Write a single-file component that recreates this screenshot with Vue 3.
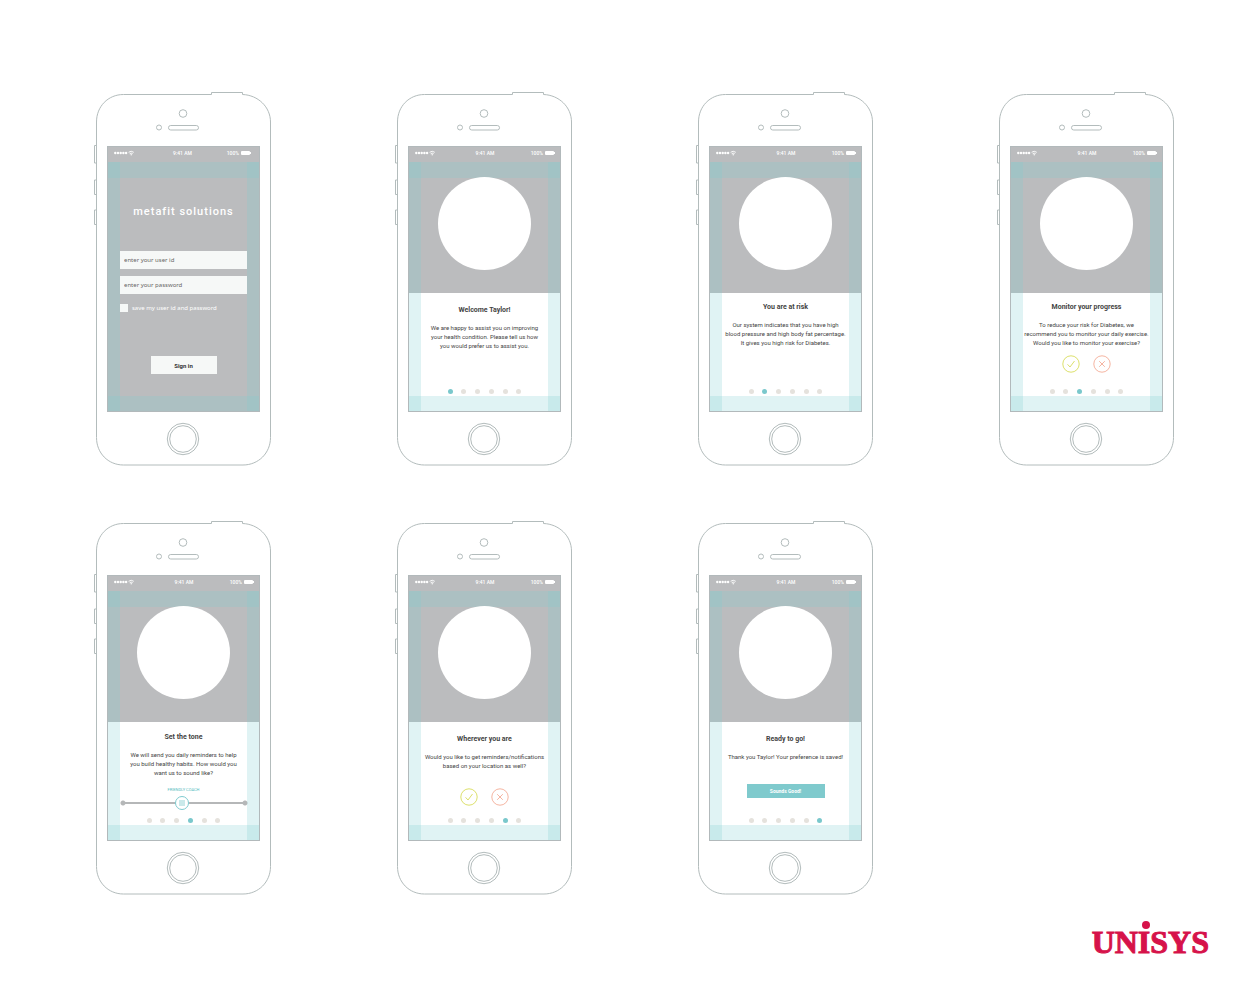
<script setup>
import { ref } from 'vue'

const userId = ref('')
const password = ref('')
const remember = ref(false)
const tone = ref(49)

const phones = [
  { id: 'login', kind: 'login' },
  {
    id: 'welcome', kind: 'step', step: 0, title: 'Welcome Taylor!',
    lines: ['We are happy to assist you on improving', 'your health condition. Please tell us how', 'you would prefer us to assist you.'],
  },
  {
    id: 'risk', kind: 'step', step: 1, title: 'You are at risk',
    lines: ['Our system indicates that you have high', 'blood pressure and high body fat percentage.', 'It gives you high risk for Diabetes.'],
  },
  {
    id: 'progress', kind: 'step', step: 2, title: 'Monitor your progress', control: 'choice',
    lines: ['To reduce your risk for Diabetes, we', 'recommend you to monitor your daily exercise.', 'Would you like to monitor your exercise?'],
  },
  {
    id: 'tone', kind: 'step', step: 3, title: 'Set the tone', control: 'slider',
    lines: ['We will send you daily reminders to help', 'you build healthy habits. How would you', 'want us to sound like?'],
  },
  {
    id: 'location', kind: 'step', step: 4, title: 'Wherever you are', control: 'choice',
    lines: ['Would you like to get reminders/notifications', 'based on your location as well?'],
  },
  {
    id: 'ready', kind: 'step', step: 5, title: 'Ready to go!', control: 'done',
    lines: ['Thank you Taylor! Your preference is saved!'],
  },
]
</script>

<template>
  <main class="board">
    <section class="phones">
      <article v-for="p in phones" :key="p.id" class="phone" :class="p.id">
        <svg class="frame" viewBox="0 0 178 374" fill="none" stroke="#b3bcbc" aria-hidden="true">
          <path d="M30.500 2.500H118.500V0.500H149.500V2.500C165 3 177.500 15 177.500 30V345.500C177.500 361 165.500 373 150 373H30.500C15 373 3.500 361 3.500 345.500V30C3.500 14.500 15 2.500 30.500 2.500Z" />
          <path d="M3.500 53.500H1.500V71H3.500M3.500 88H1.500V102.500H3.500M3.500 118H1.500V132.500H3.500" />
          <circle cx="90" cy="21.500" r="3.800" />
          <circle cx="66" cy="35.500" r="2.500" />
          <rect x="75.500" y="33.500" width="30" height="4.500" rx="2.200" />
          <circle cx="90" cy="347" r="15.700" />
          <circle cx="90" cy="347" r="13.300" />
        </svg>

        <div class="screen">
          <header class="status">
            <svg class="signal" viewBox="0 0 20 6" fill="#fff" aria-hidden="true">
              <circle v-for="n in 5" :key="n" :cx="n * 2.7 - 1.400" cy="3" r="1.200" />
              <path d="M14.600 2.300Q17.200 0.200 19.800 2.300M15.700 3.700Q17.200 2.500 18.700 3.700" fill="none" stroke="#fff" stroke-width=".9" />
              <circle cx="17.200" cy="4.800" r=".7" />
            </svg>
            <span class="time">9:41 AM</span>
            <span class="power">
              100%
              <svg class="battery" viewBox="0 0 10 4" fill="#fff" aria-hidden="true">
                <rect width="9" height="4" rx="1" />
                <rect x="9" y="1" width="1" height="2" />
              </svg>
            </span>
          </header>

          <form v-if="p.kind === 'login'" class="login" @submit.prevent>
            <h1>metafit solutions</h1>
            <input v-model="userId" class="field" type="text" placeholder="enter your user id" aria-label="User id" />
            <input v-model="password" class="field" type="password" placeholder="enter your password" aria-label="Password" />
            <label class="remember">
              <input v-model="remember" type="checkbox" />
              <span>save my user id and password</span>
            </label>
            <button class="signin" type="submit">Sign in</button>
          </form>

          <template v-else>
            <div class="hero"><div class="disc"></div></div>
            <div class="panel">
              <h2>{{ p.title }}</h2>
              <p><span v-for="l in p.lines" :key="l">{{ l }}</span></p>

              <div v-if="p.control === 'choice'" class="choice">
                <button class="yes" type="button" aria-label="Yes">
                  <svg viewBox="0 0 18 18" fill="none" stroke="currentColor">
                    <circle cx="9" cy="9" r="8.200" />
                    <path d="M5.500 9.300L8 12L12.500 6" />
                  </svg>
                </button>
                <button class="no" type="button" aria-label="No">
                  <svg viewBox="0 0 18 18" fill="none" stroke="currentColor">
                    <circle cx="9" cy="9" r="8.200" />
                    <path d="M6.200 6.200L11.800 11.800M11.800 6.200L6.200 11.800" />
                  </svg>
                </button>
              </div>

              <div v-if="p.control === 'slider'" class="tone-control">
                <label for="tone-range">FRIENDLY COACH</label>
                <input id="tone-range" v-model="tone" type="range" min="0" max="100" />
              </div>

              <button v-if="p.control === 'done'" class="done" type="button">Sounds Good!</button>

              <div class="dots">
                <i v-for="n in 6" :key="n" :class="{ on: n - 1 === p.step }"></i>
              </div>
            </div>
          </template>

          <div class="guide left"></div>
          <div class="guide right"></div>
          <div class="guide top"></div>
          <div class="guide bottom"></div>
        </div>
      </article>
    </section>

    <footer><span class="brand">UNISYS</span></footer>
  </main>
</template>

<style>
body {
  margin: 0;
  background: #fff;
}
</style>

<style scoped>
.board {
  box-sizing: border-box;
  min-height: 100vh;
  padding: 92px 32px 31px 93px;
  font-family: Roboto, "Liberation Sans", sans-serif;
  color: #444;
  display: flex;
  flex-direction: column;
}
.phones {
  display: grid;
  grid-template-columns: repeat(4, 178px);
  justify-content: space-between;
  row-gap: 55px;
  padding-right: 35px;
}
.phone {
  position: relative;
  box-sizing: border-box;
  height: 374px;
  padding: 54px 11px 54px 14px;
}
.frame {
  position: absolute;
  inset: 0;
  width: 100%;
  height: 100%;
}
.screen {
  position: relative;
  box-sizing: border-box;
  height: 100%;
  display: flex;
  flex-direction: column;
  background: #fff;
}
.screen::after {
  content: "";
  position: absolute;
  inset: 0;
  border: 1px solid #b2b9bb;
  pointer-events: none;
}
.status {
  box-sizing: border-box;
  height: 16px;
  padding: 0 6px 2px 7px;
  display: grid;
  grid-template-columns: 1fr auto 1fr;
  align-items: center;
  background: #bbbcbe;
  color: #fff;
  font-size: 5px;
  line-height: 6px;
  font-weight: 500;
}
.login .status {
  padding-right: 9px;
}
.signal {
  width: 20px;
  height: 6px;
}
.power {
  display: flex;
  align-items: center;
  justify-content: flex-end;
  gap: 2px;
}
.battery {
  width: 10px;
  height: 4px;
}

.guide {
  position: absolute;
  background: rgba(126, 206, 208, 0.24);
  pointer-events: none;
}
.left,
.right {
  top: 16px;
  bottom: 0;
  width: 13px;
}
.left {
  left: 0;
}
.right {
  right: 0;
}
.top,
.bottom {
  left: 0;
  right: 0;
  height: 16px;
}
.top {
  top: 16px;
}
.bottom {
  bottom: 0;
}

form.login {
  flex: 1;
  padding: 0 13px;
  display: flex;
  flex-direction: column;
  background: #bbbcbe;
}
h1 {
  margin: 42px 0 31px;
  text-align: center;
  color: #fff;
  font-size: 11px;
  line-height: 16px;
  font-weight: 500;
  letter-spacing: 1px;
}
input,
button {
  font-family: inherit;
  border: 0;
  border-radius: 0;
  margin: 0;
  padding: 0;
}
.field {
  box-sizing: border-box;
  position: relative;
  z-index: 1;
  width: 100%;
  height: 18px;
  margin-bottom: 7px;
  padding: 0 4px;
  background: #f6f8f7;
  font-family: "Noto Sans", sans-serif;
  font-size: 6px;
  color: #666;
}
.field::placeholder {
  color: #666;
  opacity: 1;
}
.remember {
  display: flex;
  align-items: center;
  gap: 4px;
  margin-top: 3px;
  height: 8px;
  color: #fff;
  font-family: "Noto Sans", sans-serif;
  font-size: 6px;
  line-height: 8px;
}
.remember input {
  appearance: none;
  width: 8px;
  height: 8px;
  background: #f6f8f7;
}
.signin {
  align-self: center;
  width: 66px;
  height: 18px;
  margin-top: 44px;
  background: #f6f8f7;
  color: #333;
  font-size: 6px;
  font-weight: 700;
}

.hero {
  height: 131px;
  display: flex;
  justify-content: center;
  background: #bbbcbe;
}
.disc {
  position: relative;
  z-index: 1;
  width: 93px;
  height: 93px;
  margin-top: 15px;
  border-radius: 50%;
  background: #fff;
}
.panel {
  flex: 1;
  display: flex;
  flex-direction: column;
  align-items: center;
  padding: 10px 0 18px;
}
.tone .panel {
  padding-top: 11px;
}
.welcome .panel,
.location .panel,
.ready .panel {
  padding-top: 13px;
}
h2 {
  margin: 0 0 8px;
  font-size: 7px;
  line-height: 9px;
  font-weight: 700;
}
p {
  margin: 0;
  text-align: center;
  font-size: 6px;
  line-height: 9px;
}
p span {
  display: block;
  white-space: nowrap;
}
.choice {
  display: flex;
  gap: 13px;
  margin-top: 8px;
}
.location .choice {
  margin-top: 18px;
}
.choice button {
  width: 18px;
  height: 18px;
  background: none;
}
.choice svg {
  display: block;
  width: 18px;
  height: 18px;
}
.yes {
  color: #dce06c;
}
.no {
  color: #f5b5a2;
}
.tone-control {
  display: flex;
  flex-direction: column;
  align-items: center;
  width: 128px;
  margin-top: 10px;
}
.tone-control label {
  color: #55bcc1;
  font-size: 4px;
  line-height: 6px;
}
.tone-control input {
  appearance: none;
  width: 100%;
  height: 14px;
  margin-top: 3px;
  background:
    radial-gradient(circle at 3px 7px, #b5b7b8 2px, transparent 3px),
    radial-gradient(circle at calc(100% - 3px) 7px, #b5b7b8 2px, transparent 3px),
    linear-gradient(#b5b7b8, #b5b7b8) center / calc(100% - 6px) 2px no-repeat;
}
.tone-control input::-webkit-slider-thumb {
  appearance: none;
  box-sizing: border-box;
  width: 14px;
  height: 14px;
  border: 1px solid #7ecbd0;
  border-radius: 50%;
  background: linear-gradient(#c9e9ea, #c9e9ea) center / 6px 6px no-repeat #fff;
}
.done {
  width: 78px;
  height: 14px;
  margin-top: 23px;
  background: #7fcacd;
  color: #fff;
  font-size: 5px;
  font-weight: 700;
}
.dots {
  display: flex;
  justify-content: space-between;
  width: 74px;
  margin-top: auto;
}
.dots i {
  width: 5px;
  height: 5px;
  border-radius: 50%;
  background: #e5e2dd;
}
.dots .on {
  background: #7ac8cc;
}

footer {
  margin-top: auto;
  display: flex;
  justify-content: flex-end;
}
.brand {
  position: relative;
  color: #d6124a;
  font-family: "Liberation Serif", serif;
  font-size: 32px;
  line-height: 36px;
  font-weight: 700;
  -webkit-text-stroke: 1px #d6124a;
}
.brand::before {
  content: "";
  position: absolute;
  left: 50px;
  top: -3px;
  width: 8px;
  height: 8px;
  border-radius: 50%;
  background: #d6124a;
}
</style>
